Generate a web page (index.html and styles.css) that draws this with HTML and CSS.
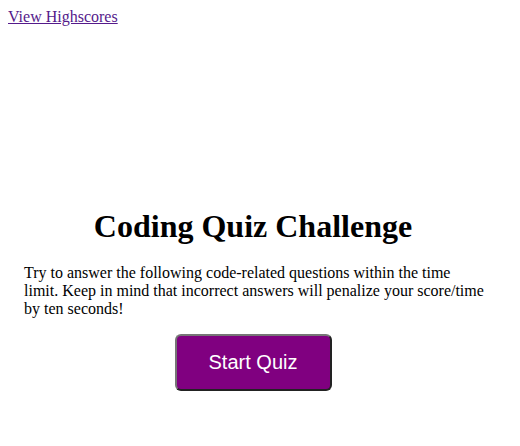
FILE: index.html
```html
<!DOCTYPE html>
<html>
<head>
<meta charset="utf-8">
<link rel="stylesheet" href="styles.css">
</head>
<body>
<header class="top">
  <a class="scores" href="#">View Highscores</a>
</header>
<main class="intro">
  <h1 class="title">Coding Quiz Challenge</h1>
  <p class="desc">Try to answer the following code-related questions within the time limit. Keep in mind that incorrect answers will penalize your score/time by ten seconds!</p>
  <div class="actions">
    <button class="start">Start Quiz</button>
  </div>
</main>
</body>
</html>
```
FILE: styles.css
```css
body {
  margin: 8px;
  font-family: "Liberation Serif", "Times New Roman", serif;
  font-size: 16px;
  color: #000;
  background: #fff;
}
.scores {
  color: #551a8b;
}
.intro {
  margin: 182px 0 0 16px;
  width: 458px;
}
.title {
  margin: 0 0 19px;
  font-size: 32px;
  text-align: center;
}
.desc {
  margin: 0 -4px 16px 0;
}
.actions {
  display: flex;
  justify-content: center;
}
.start {
  font-family: "Liberation Sans", Arial, sans-serif;
  font-size: 20px;
  color: #fff;
  background: #800080;
  border: 2px solid #767676;
  border-color: #767676 #222 #222 #767676;
  border-radius: 6px;
  padding: 15px 29px;
  line-height: 23px;
  width: 157px;
}
```
